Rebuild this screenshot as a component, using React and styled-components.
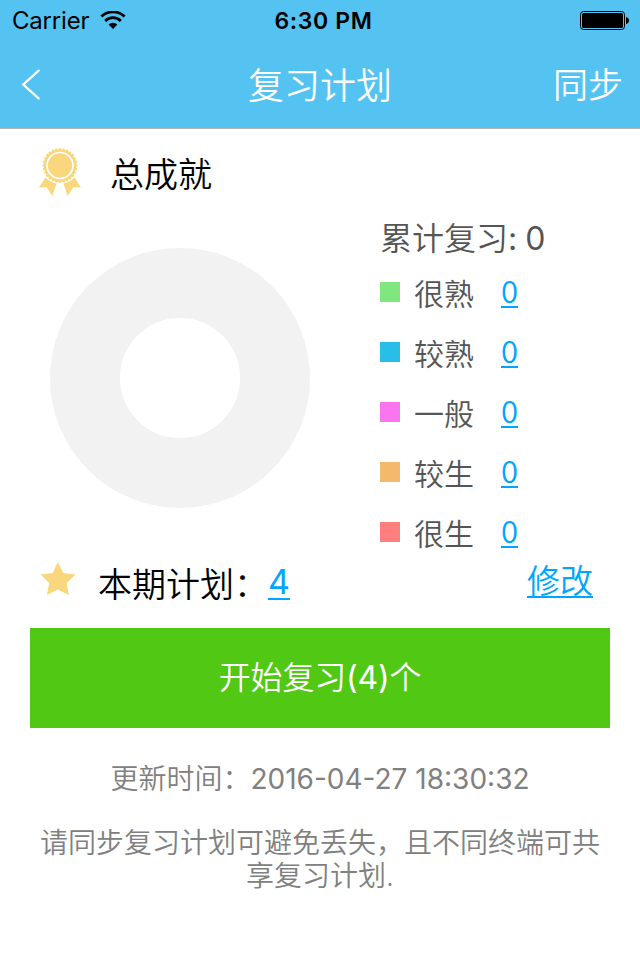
import styled, { createGlobalStyle } from 'styled-components';

const levels = [
    { id: '1', label: '很熟', color: '#80e67f', count: 0 },
    { id: '2', label: '较熟', color: '#27bfe8', count: 0 },
    { id: '3', label: '一般', color: '#fb75ee', count: 0 },
    { id: '4', label: '较生', color: '#f5b96b', count: 0 },
    { id: '5', label: '很生', color: '#ff7f7f', count: 0 },
];

const teeth = Array.from({ length: 28 }, (_, i) => {
    const a = (i * 2 * Math.PI) / 28;
    return { x: 21 + 16.2 * Math.cos(a), y: 17.5 + 16.2 * Math.sin(a) };
});

const WifiIcon = () => (
    <svg width="26" height="18" viewBox="0 0 26 18">
        <path
            d="M1.4 5.4A17 17 0 0 1 24.6 5.4M5.2 9.9A11 11 0 0 1 20.8 9.9"
            fill="none"
            stroke="#000"
            strokeWidth="2.8"
        />
        <path d="M8.6 13.6A6.4 6.4 0 0 1 17.4 13.6L13 18Z" fill="#000" />
    </svg>
);

const BatteryIcon = () => (
    <svg width="49" height="19" viewBox="0 0 49 19">
        <rect
            x="0.5"
            y="0.5"
            width="44"
            height="18"
            rx="3"
            fill="none"
            stroke="#000"
        />
        <rect x="2" y="2" width="41" height="15" rx="1.5" />
        <path d="M46 6C50 6.5 50 12.5 46 13Z" />
    </svg>
);

const BackIcon = () => (
    <svg width="20" height="32" viewBox="0 0 20 32">
        <path
            d="M17.6 1.6L2.2 15.6L17.6 29.4"
            fill="none"
            stroke="#fff"
            strokeWidth="2.3"
            strokeLinecap="round"
        />
    </svg>
);

const MedalIcon = () => (
    <svg width="42" height="48" viewBox="0 0 42 48" fill="#fad67c">
        <path d="M6.5 29.5L0 39.5L7.7 39.2L13.4 48L17.5 35.4Q10.5 34 6.5 29.5Z" />
        <path d="M35.5 29.5L42 39.5L34.3 39.2L28.6 48L24.5 35.4Q31.5 34 35.5 29.5Z" />
        <circle cx="21" cy="17.5" r="16.2" />
        {teeth.map((t, i) => (
            <circle key={i} cx={t.x} cy={t.y} r="1.3" />
        ))}
        <circle
            cx="21"
            cy="17.5"
            r="13"
            fill="none"
            stroke="#fff"
            strokeWidth="1.7"
        />
    </svg>
);

const StarIcon = () => (
    <svg width="36" height="34" viewBox="0 0 36 34" fill="#fad67c">
        <path d="M18 0L23.2 11L35.5 12.6L26.6 21.1L28.8 33L18 27.4L6.9 33L9.2 21.1L0.5 12.6L12.6 11Z" />
    </svg>
);

const App = () => {
    return (
        <Container>
            <GlobalStyle />
            <Header>
                <StatusBar>
                    <Carrier>
                        <span>Carrier</span>
                        <WifiIcon />
                    </Carrier>
                    <Clock>6:30 PM</Clock>
                    <Battery>
                        <BatteryIcon />
                    </Battery>
                </StatusBar>
                <NavBar>
                    <NavButton>
                        <BackIcon />
                    </NavButton>
                    <NavTitle>复习计划</NavTitle>
                    <NavButton $right>同步</NavButton>
                </NavBar>
            </Header>
            <AchieveTitle>
                <MedalIcon />
                <h2>总成就</h2>
            </AchieveTitle>
            <Stats>
                <Donut />
                <Legend>
                    <Total>
                        累计复习<Num>: 0</Num>
                    </Total>
                    {levels.map((level) => (
                        <LegendRow key={level.id}>
                            <Swatch $color={level.color} />
                            <span>{level.label}</span>
                            <CountLink href="#">{level.count}</CountLink>
                        </LegendRow>
                    ))}
                </Legend>
            </Stats>
            <PlanRow>
                <StarIcon />
                <h2>本期计划：</h2>
                <PlanLink href="#">4</PlanLink>
                <EditLink href="#">修改</EditLink>
            </PlanRow>
            <StartButton>
                开始复习<Num>(4)</Num>个
            </StartButton>
            <Updated>
                更新时间：<Num>2016-04-27 18:30:32</Num>
            </Updated>
            <Tip>请同步复习计划可避免丢失，且不同终端可共享复习计划.</Tip>
        </Container>
    );
};

const GlobalStyle = createGlobalStyle`
    * {
        box-sizing: border-box;
    }

    body {
        margin: 0;
        background: #fff;
    }

    h1, h2, p {
        margin: 0;
        font-weight: inherit;
    }

    svg {
        display: block;
        flex-shrink: 0;
    }
`;

const Container = styled.div`
    width: 640px;
    height: 960px;
    overflow: hidden;
    background: #fff;
    color: #000;
    font-family: Inter, 'Noto Sans CJK SC', sans-serif;
    font-weight: 350;
`;

const Num = styled.span`
    font-weight: 400;
`;

const Header = styled.header`
    height: 129px;
    background: #54c3f1;
    border-bottom: 1px solid #b2b2b2;
`;

const StatusBar = styled.div`
    display: grid;
    grid-template-columns: 1fr auto 1fr;
    align-items: center;
    height: 40px;
    padding: 0 11px 0 12px;
    font-size: 24px;
    line-height: 40px;
    font-weight: 400;
`;

const Carrier = styled.div`
    display: flex;
    align-items: center;
    gap: 11px;
    letter-spacing: -0.2px;

    span {
        padding-top: 1px;
    }

    svg {
        margin-bottom: 1px;
    }
`;

const Clock = styled.div`
    padding-top: 1px;
    font-size: 23px;
    font-weight: 600;
    letter-spacing: 0.6px;
    margin-left: 6px;
`;

const Battery = styled.div`
    justify-self: end;
`;

//상단 메뉴
const NavBar = styled.nav`
    display: grid;
    grid-template-columns: 1fr auto 1fr;
    align-items: center;
    height: 88px;
    padding: 0 17px 0 21px;
    color: #fff;
`;

const NavTitle = styled.h1`
    padding-top: 2px;
    margin-left: -4px;
    font-size: 36px;
    line-height: 88px;
`;

const NavButton = styled.button`
    justify-self: ${(props) => (props.$right ? 'end' : 'start')};
    padding: 0;
    border: 0;
    background: none;
    color: inherit;
    font: inherit;
    font-size: 35px;
    line-height: 40px;
`;

const AchieveTitle = styled.div`
    display: flex;
    align-items: center;
    gap: 29px;
    height: 86px;
    padding-left: 39px;

    h2 {
        padding-top: 6px;
        font-size: 34px;
        line-height: 40px;
    }
`;

const Stats = styled.section`
    display: flex;
    gap: 70px;
    height: 344px;
    padding: 1px 0 0 50px;
`;

const Donut = styled.div`
    width: 260px;
    height: 260px;
    margin-top: 32px;
    border: 70px solid #f2f2f2;
    border-radius: 50%;
`;

const Legend = styled.div`
    color: #555;
`;

const Total = styled.p`
    height: 46px;
    font-size: 32px;
    line-height: 46px;

    ${Num} {
        letter-spacing: -0.5px;
    }
`;

const LegendRow = styled.div`
    display: flex;
    align-items: center;
    height: 60px;
    font-size: 30px;
    line-height: 60px;

    span {
        margin: 4px 27px 0 14px;
    }
`;

const Swatch = styled.i`
    width: 20px;
    height: 20px;
    background: ${(props) => props.$color};
`;

const Link = styled.a`
    color: #00a5ff;
    text-decoration: underline;
    text-decoration-thickness: 2px;
    text-decoration-skip-ink: none;
`;

const CountLink = styled(Link)`
    margin-bottom: 4px;
    font-family: 'Noto Sans CJK SC', sans-serif;
    font-size: 31px;
    text-underline-offset: 3px;
`;

const PlanRow = styled.div`
    display: flex;
    align-items: center;
    height: 41px;
    padding: 0 47px 0 40px;
    font-size: 34px;
    line-height: 40px;

    svg {
        margin-bottom: 2px;
    }

    h2 {
        margin: 10px 0 0 22px;
        font-size: 34px;
    }
`;

const PlanLink = styled(Link)`
    margin-top: 5px;
    font-weight: 400;
    text-underline-offset: 4px;
`;

const EditLink = styled(Link)`
    margin: 3px 0 0 auto;
    font-size: 33px;
    text-underline-offset: 3px;
`;

const StartButton = styled.button`
    display: block;
    width: 580px;
    height: 100px;
    margin: 28px 30px 0;
    padding: 0;
    border: 0;
    background: #50c814;
    color: #fff;
    font: inherit;
    font-size: 32px;
    line-height: 100px;
    letter-spacing: -0.2px;
`;

const Updated = styled.p`
    margin-top: 34px;
    color: #808080;
    font-size: 28px;
    line-height: 34px;
    text-align: center;
    white-space: nowrap;
`;

const Tip = styled.p`
    margin: 31px 40px 0;
    color: #808080;
    font-size: 28px;
    line-height: 33px;
    text-align: center;
`;

export default App;
